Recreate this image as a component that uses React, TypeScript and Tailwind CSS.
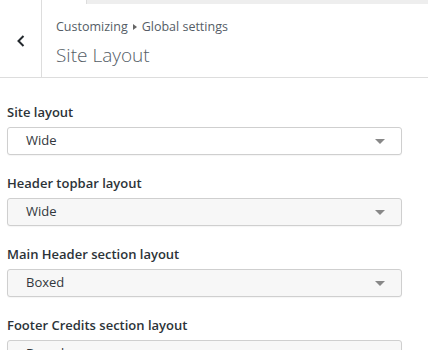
function ChevronLeft() {
  return (
    <svg width="10" height="14" viewBox="0 0 10 14" fill="none">
      <path d="M7.5 2 L2.5 7 L7.5 12" stroke="#23282d" strokeWidth="2" />
    </svg>
  );
}

function SelectRow({ label, value, active }: { label: string; value: string; active?: boolean }) {
  return (
    <div className="mb-[18px] flex flex-col">
      <div className="mb-[5px] text-[13px] leading-[20px] font-semibold text-[#2c3338]">{label}</div>
      <div
        className={`flex h-[28px] items-center justify-between rounded-[3px] border border-[#cfcfcf] pr-[16px] pl-[18px] shadow-[0_1px_1px_rgba(0,0,0,0.04)] ${
          active ? "bg-white" : "bg-[#f7f7f7]"
        }`}
      >
        <span className="text-[13px] text-[#32373c]">{value}</span>
        <span className="h-0 w-0 border-t-[5px] border-r-[5px] border-l-[5px] border-t-[#888] border-r-transparent border-l-transparent" />
      </div>
    </div>
  );
}

export default function App() {
  return (
    <div
      className="h-[350px] w-[428px] overflow-hidden bg-white"
      style={{ fontFamily: '"Open Sans", "Noto Sans", sans-serif' }}
    >
      <div className="flex h-[4px]">
        <div className="w-[42px] border-r border-[#ddd] bg-white" />
        <div className="w-[45px] border-r border-[#ddd] bg-white" />
        <div className="flex-1 bg-[#eeeeee]" />
      </div>

      <div className="flex h-[74px] border-b border-[#dddddd]">
        <div className="flex w-[42px] items-center justify-center border-r border-[#dddddd]">
          <ChevronLeft />
        </div>
        <div className="flex flex-col pt-[14px] pl-[14px]">
          <div className="flex items-center text-[12.5px] leading-[18px] text-[#555d66]">
            Customizing
            <span className="mx-[5px] h-0 w-0 border-t-[3px] border-b-[3px] border-l-[4px] border-t-transparent border-b-transparent border-l-[#666]" />
            Global settings
          </div>
          <div className="mt-[5px] text-[19px] leading-[28px] font-light text-[#555d66]">Site Layout</div>
        </div>
      </div>

      <div className="pt-[24px] pr-[26px] pl-[7px]">
        <SelectRow label="Site layout" value="Wide" active />
        <SelectRow label="Header topbar layout" value="Wide" />
        <SelectRow label="Main Header section layout" value="Boxed" />
        <SelectRow label="Footer Credits section layout" value="Boxed" />
      </div>
    </div>
  );
}
